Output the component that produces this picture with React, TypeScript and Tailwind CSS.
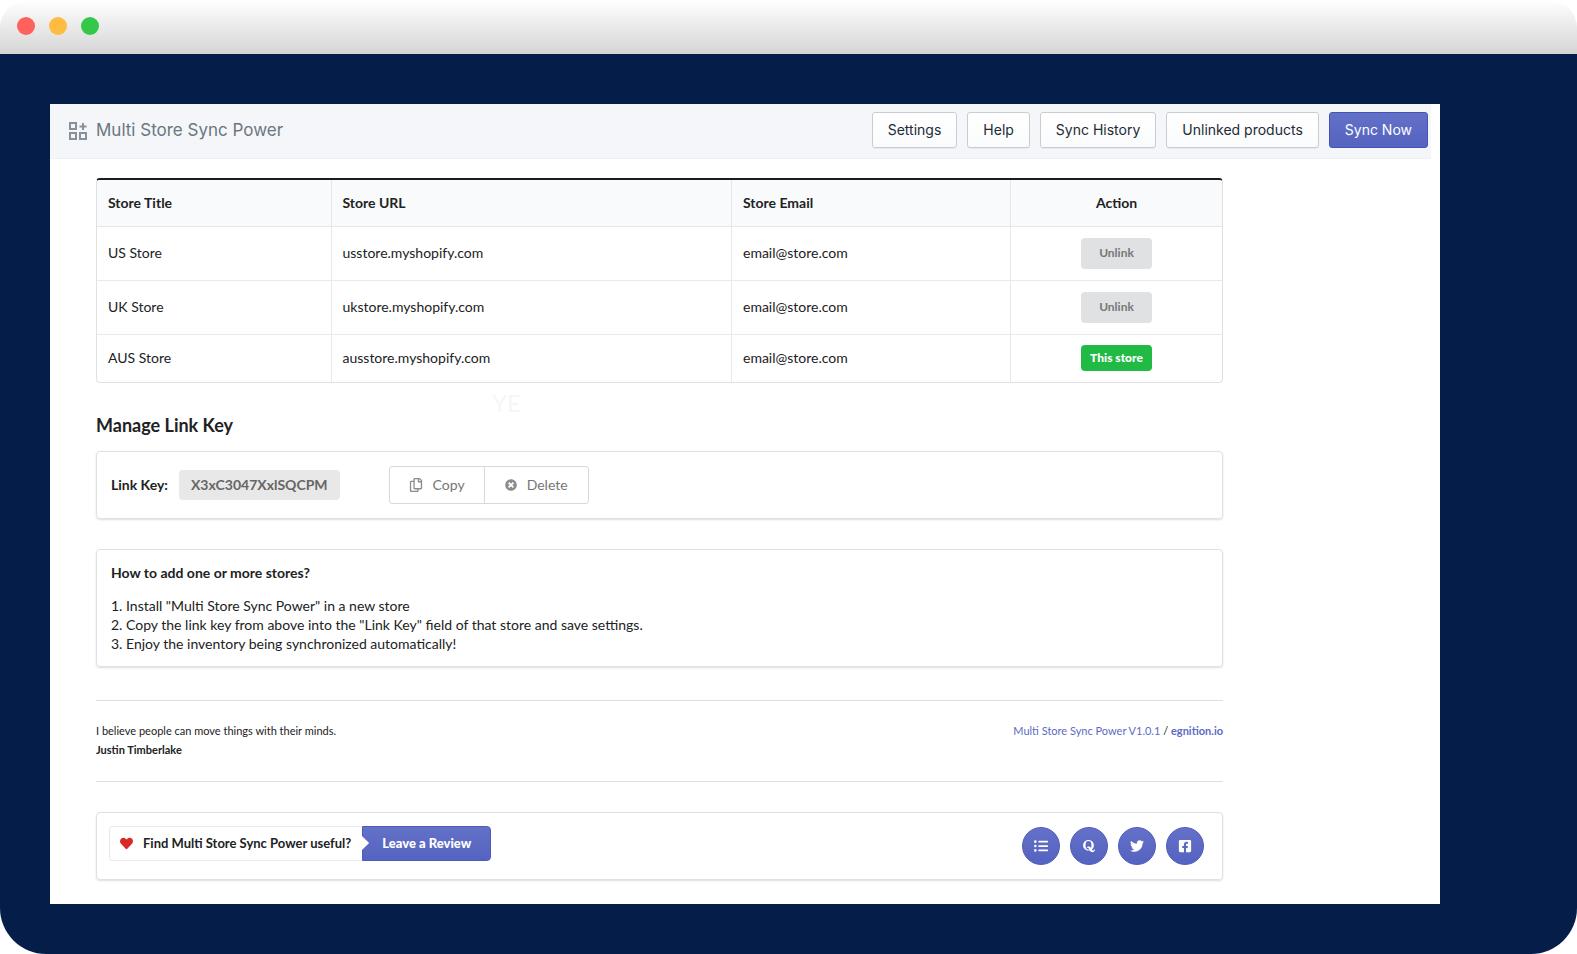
import type { ReactNode } from "react";
import { FaFacebookSquare, FaHeart, FaListUl, FaQuora, FaRegCopy, FaTimesCircle, FaTwitter } from "react-icons/fa";

const stores = [
  { title: "US Store", url: "usstore.myshopify.com", email: "email@store.com", current: false },
  { title: "UK Store", url: "ukstore.myshopify.com", email: "email@store.com", current: false },
  { title: "AUS Store", url: "ausstore.myshopify.com", email: "email@store.com", current: true },
];

const navItems = ["Settings", "Help", "Sync History", "Unlinked products"];

const socials = [
  { label: "Changelog", icon: <FaListUl /> },
  { label: "Quora", icon: <FaQuora /> },
  { label: "Twitter", icon: <FaTwitter /> },
  { label: "Facebook", icon: <FaFacebookSquare /> },
];

function Card({ className, children }: { className: string; children: ReactNode }) {
  return (
    <section className={`rounded border border-[#e0e1e2] shadow-[0_1px_2px_rgba(34,36,38,0.15)] ${className}`}>
      {children}
    </section>
  );
}

function TitleBar() {
  return (
    <div className="flex h-[54px] items-center gap-[14px] rounded-t-[28px] bg-linear-to-b from-white to-[#d5d5d5] pl-[17px]">
      <span className="-mt-[2px] size-[18px] rounded-full bg-[#ff615c]" />
      <span className="-mt-[2px] size-[18px] rounded-full bg-[#ffbc40]" />
      <span className="-mt-[2px] size-[18px] rounded-full bg-[#34c84a]" />
    </div>
  );
}

function Header() {
  return (
    <header className="mr-[9px] flex h-[55px] justify-between border-b border-[#eef0f3] bg-[#f4f6f9] font-[Inter,sans-serif]">
      <div className="flex items-center gap-2 pl-[18px] text-[#6b7680]">
        <svg viewBox="0 0 20 20" className="size-5" fill="none" stroke="#87919b" strokeWidth="2">
          <path d="M2 2h6v6H2zM2 12h6v6H2zM12 12h6v6h-6zM15 2v7M11.500 5.500h7" />
        </svg>
        <h1 className="text-[17px]">Multi Store Sync Power</h1>
      </div>
      <nav className="flex gap-[10px] pt-2 pr-[3px]">
        {navItems.map((item) => (
          <button
            key={item}
            className="h-9 rounded-[3px] border border-[#c9cdd3] bg-linear-to-b from-white to-[#fafbfc] px-[15px] text-sm text-[#212b36] shadow-[0_1px_0_rgba(22,29,37,0.05)]"
          >
            {item}
          </button>
        ))}
        <button className="h-9 rounded-[3px] border border-[#4553b8] bg-linear-to-b from-[#6371c7] to-[#5563c1] px-[15px] text-sm text-white">
          Sync Now
        </button>
      </nav>
    </header>
  );
}

function StoreTable() {
  return (
    <div className="overflow-hidden rounded border border-t-2 border-[#e0e1e2] border-t-[#1b1c1d]">
      <table className="w-full table-fixed text-left text-sm">
        <colgroup>
          <col className="w-[20.8%]" />
          <col className="w-[35.6%]" />
          <col className="w-[24.8%]" />
          <col />
        </colgroup>
        <thead className="bg-[#f9fafb]">
          <tr className="h-[46px] divide-x divide-[#e5e6e8] border-b border-[#e5e6e8]">
            <th className="px-[11px] font-bold">Store Title</th>
            <th className="px-[11px] font-bold">Store URL</th>
            <th className="px-[11px] font-bold">Store Email</th>
            <th className="px-[11px] text-center font-bold">Action</th>
          </tr>
        </thead>
        <tbody>
          {stores.map((store) => (
            <tr
              key={store.url}
              className="h-[54px] divide-x divide-[#e8e9ea] border-b border-[#e8e9ea] last:h-[48px] last:border-b-0"
            >
              <td className="px-[11px]">{store.title}</td>
              <td className="px-[11px]">{store.url}</td>
              <td className="px-[11px]">{store.email}</td>
              <td className="px-[11px] text-center">
                {store.current ? (
                  <span className="inline-block rounded bg-[#21ba45] px-[9px] py-1 text-xs leading-[18px] font-black text-white">
                    This store
                  </span>
                ) : (
                  <button className="h-[31px] w-[71px] rounded bg-[#e0e1e2] text-xs font-bold text-[#767778]">
                    Unlink
                  </button>
                )}
              </td>
            </tr>
          ))}
        </tbody>
      </table>
    </div>
  );
}

function LinkKey() {
  return (
    <Card className="mt-[14px] flex h-[68px] items-center pl-[14px]">
      <span className="text-sm font-bold">Link Key:</span>
      <span className="ml-[11px] rounded bg-[#e8e8e8] px-3 text-sm leading-[30px] font-bold text-[#666]">
        X3xC3047XxlSQCPM
      </span>
      <div className="ml-[49px] flex h-[38px] divide-x divide-[#d8d9da] rounded-[3px] border border-[#d8d9da] text-sm text-[#767676]">
        <button className="flex items-center gap-[10px] px-[19px]">
          <FaRegCopy className="text-[#8c8c8c]" />
          Copy
        </button>
        <button className="flex items-center gap-[10px] px-5">
          <FaTimesCircle className="size-3 text-[#8c8c8c]" />
          Delete
        </button>
      </div>
    </Card>
  );
}

export default function App() {
  return (
    <div className="min-h-screen bg-white font-[Lato,sans-serif] text-[#212223]">
      <TitleBar />
      <div className="min-h-[900px] rounded-b-[46px] bg-[#051e49] pt-[50px] pr-[137px] pb-[50px] pl-[50px]">
        <div className="bg-white pb-6">
          <Header />
          <main className="pt-[19px] pr-[217px] pl-[46px]">
            <StoreTable />
            <div className="relative">
              <span className="absolute top-1 left-[396px] text-2xl text-[#f4f7f9]">YE</span>
              <h2 className="pt-[30px] text-lg leading-[24px] font-bold">Manage Link Key</h2>
            </div>
            <LinkKey />

            <Card className="mt-[30px] h-[118px] px-[14px] pt-[13px]">
              <h3 className="text-sm leading-5 font-bold">How to add one or more stores?</h3>
              <ol className="mt-[13px] list-inside text-sm leading-[19px]">
                <li>1. Install "Multi Store Sync Power" in a new store</li>
                <li>2. Copy the link key from above into the "Link Key" field of that store and save settings.</li>
                <li>3. Enjoy the inventory being synchronized automatically!</li>
              </ol>
            </Card>

            <footer className="mt-[33px] flex h-[82px] justify-between border-y border-[#dedfe0] pt-5 text-[11px] leading-[19px]">
              <div>
                <p>I believe people can move things with their minds.</p>
                <p className="font-bold">Justin Timberlake</p>
              </div>
              <p>
                <a href="#" className="text-[#5c6ac4]">Multi Store Sync Power V1.0.1</a> /{" "}
                <a href="#" className="font-bold text-[#5c6ac4]">egnition.io</a>
              </p>
            </footer>

            <Card className="mt-[30px] flex h-[68px] justify-between pr-[18px] pl-3">
              <div className="mt-[13px] flex h-[35px] text-[13px] font-bold">
                <div className="flex items-center rounded-l border border-r-0 border-[#e8e9ea] pr-[11px] pl-[10px]">
                  <FaHeart className="mr-[10px] size-[13px] text-[#db2828]" />
                  Find Multi Store Sync Power useful?
                </div>
                <button className="relative rounded-r border border-[#4d5bbd] bg-linear-to-b from-[#6371c7] to-[#5563c1] px-[19px] font-black text-white">
                  <span className="absolute top-[11px] -left-[6px] size-[10px] rotate-45 bg-white" />
                  Leave a Review
                </button>
              </div>
              <div className="mt-[14px] flex gap-[10px]">
                {socials.map((social) => (
                  <a
                    key={social.label}
                    href="#"
                    aria-label={social.label}
                    className="flex size-[38px] items-center justify-center rounded-full border border-[#4d5bbd] bg-linear-to-b from-[#6371c7] to-[#5563c1] text-sm text-white"
                  >
                    {social.icon}
                  </a>
                ))}
              </div>
            </Card>
          </main>
        </div>
      </div>
    </div>
  );
}
